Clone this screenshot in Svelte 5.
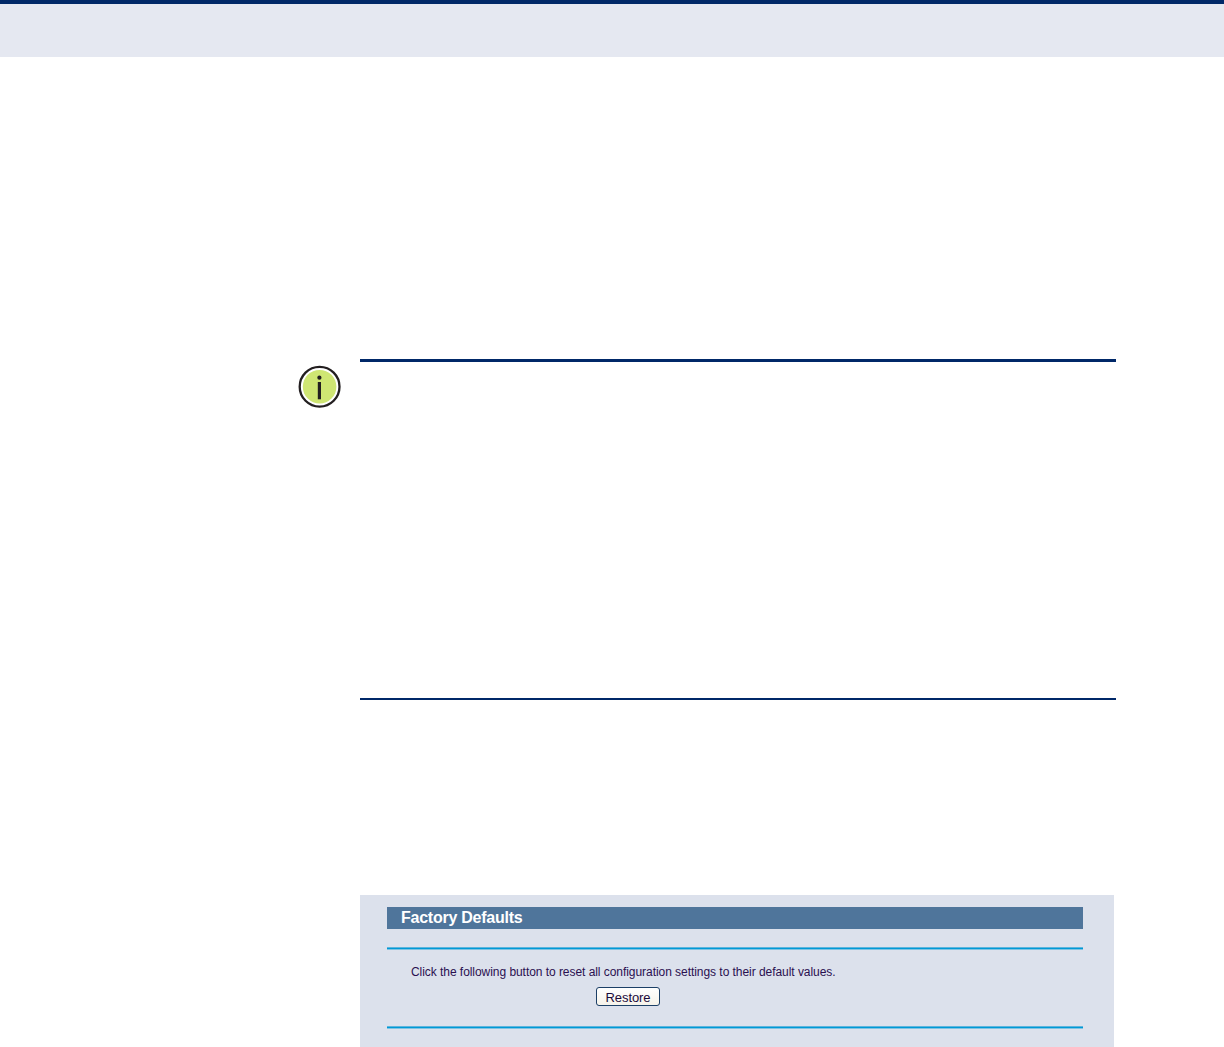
<script>
  const heading = "Factory Defaults";
  const message = "Click the following button to reset all configuration settings to their default values.";
</script>

<div class="page">
  <header class="band"></header>

  <section class="note">
    <div class="note-icon">
      <svg width="44" height="44" viewBox="0 0 44 44" aria-hidden="true">
        <circle cx="21.6" cy="21.7" r="19.9" fill="#fff" stroke="#231f20" stroke-width="2.3" />
        <circle cx="21.6" cy="21.7" r="16.8" fill="#cfe673" />
        <circle cx="21.4" cy="12.7" r="2.1" fill="#231f20" />
        <rect x="19.8" y="17" width="3.2" height="17.3" fill="#231f20" />
      </svg>
    </div>
    <div class="note-body"></div>
  </section>

  <section class="panel">
    <h2 class="panel-title">{heading}</h2>
    <div class="rule"></div>
    <div class="panel-main">
      <p class="message">{message}</p>
      <div class="actions">
        <button class="restore" type="button">Restore</button>
      </div>
    </div>
    <div class="rule"></div>
  </section>
</div>

<style>
  :global(body) {
    background: #fff;
  }

  .page {
    height: 1047px;
    overflow: hidden;
    font-family: "Liberation Sans", Arial, sans-serif;
  }

  .band {
    box-sizing: border-box;
    height: 57px;
    background: #e5e8f1;
    border-top: 4px solid #002868;
  }

  .note {
    display: flex;
    margin: 302px 108px 0 298px;
  }

  .note-icon {
    width: 62px;
    flex: none;
    padding-top: 6px;
  }

  .note-icon svg {
    display: block;
  }

  .note-body {
    flex: 1;
    box-sizing: border-box;
    height: 341px;
    border-top: 3px solid #002868;
    border-bottom: 2px solid #002868;
  }

  .panel {
    box-sizing: border-box;
    height: 152px;
    margin: 195px 110px 0 360px;
    padding: 12px 31px 0 27px;
    background: #dce1ec;
  }

  .panel-title {
    box-sizing: border-box;
    height: 22px;
    margin: 0 0 18px;
    padding-left: 14px;
    background: #4f759b;
    color: #fff;
    font-size: 16px;
    font-weight: 700;
    letter-spacing: -0.25px;
    line-height: 21px;
  }

  .rule {
    height: 3px;
    background: linear-gradient(#5db4dc 33%, #0099d6 33%, #0099d6 67%, #7fc3e3 67%);
  }

  .panel-main {
    height: 76px;
  }

  .message {
    margin: 0;
    padding: 15px 0 0 24px;
    color: #2a1050;
    font-size: 12px;
    letter-spacing: -0.05px;
    line-height: 15px;
  }

  .actions {
    padding: 7px 0 0 209px;
  }

  .restore {
    display: block;
    box-sizing: border-box;
    width: 64px;
    height: 19px;
    padding: 2px 0 0;
    background: linear-gradient(#fff, #f6f3ea);
    border: 1px solid #1c3f66;
    border-radius: 3px;
    color: #1a0a3a;
    font-family: inherit;
    font-size: 13px;
    letter-spacing: -0.1px;
    line-height: 15px;
  }
</style>
